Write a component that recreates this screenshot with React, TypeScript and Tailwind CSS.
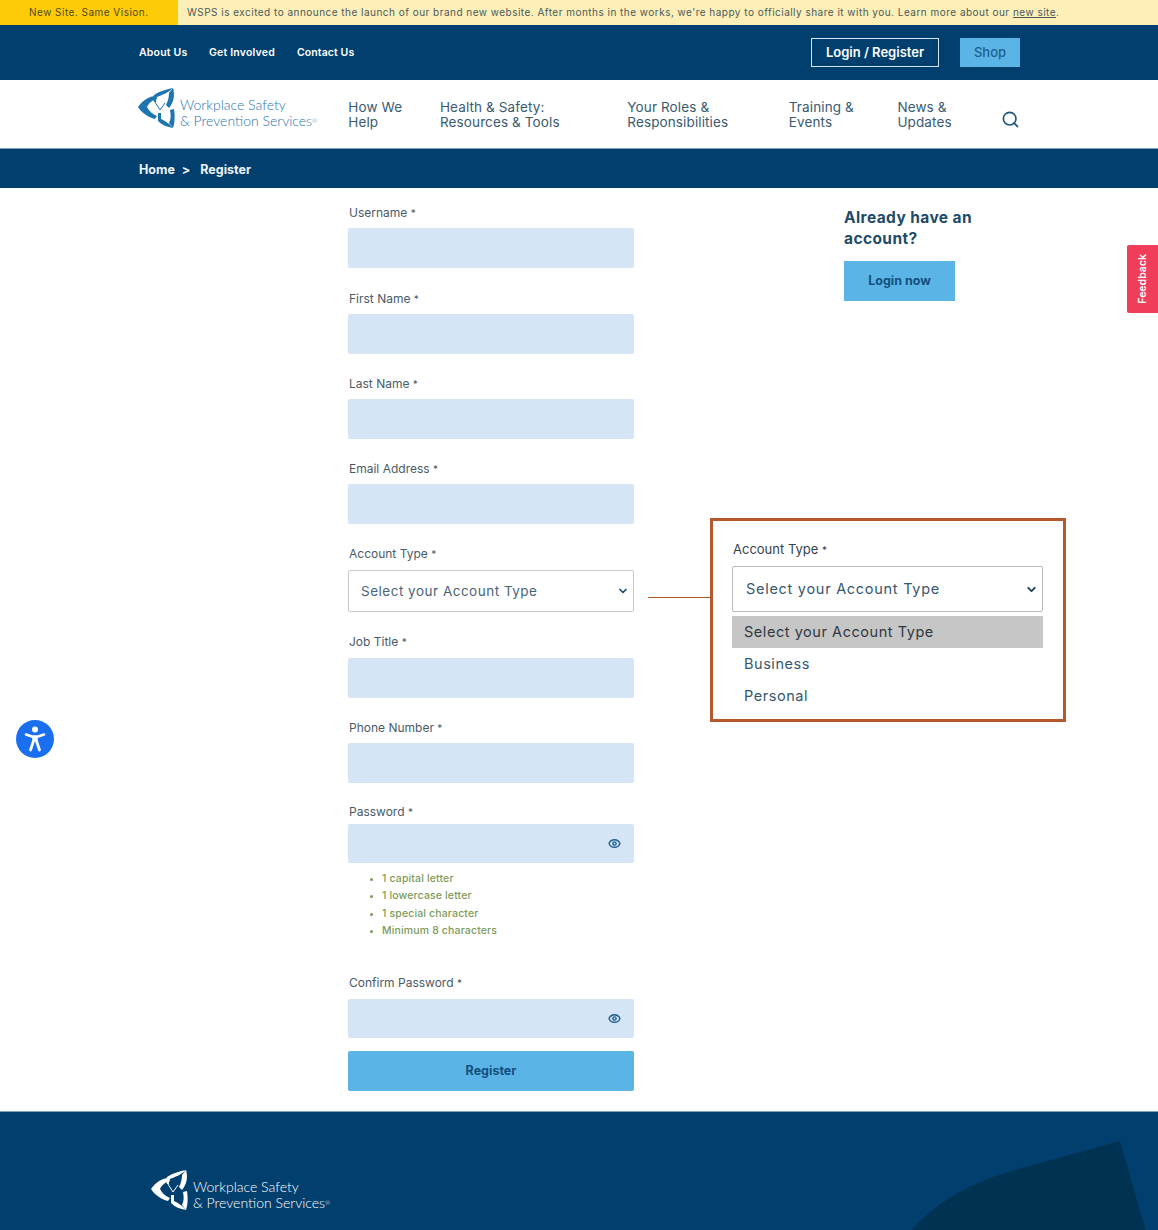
import { ChevronDown, Eye, Search } from "lucide-react";

const PASSWORD_RULES = [
  "1 capital letter",
  "1 lowercase letter",
  "1 special character",
  "Minimum 8 characters",
];

function Label({ text }: { text: string }) {
  return (
    <label className="block h-5 pl-px text-[12px] leading-5 text-[#4a5a66]">
      {text} <span className="text-[10px]">*</span>
    </label>
  );
}

function Field({ text, className, inputClass = "mt-[5px]" }: { text: string; className: string; inputClass?: string }) {
  return (
    <div className={className}>
      <Label text={text} />
      <input className={`${inputClass} block h-[40px] w-full rounded-[2px] bg-[#d5e5f6] outline-none`} />
    </div>
  );
}

function PasswordInput({ className }: { className: string }) {
  return (
    <div className={`${className} flex h-[39px] items-center justify-end rounded-[2px] bg-[#d5e5f6] pr-[13px]`}>
      <Eye size={13} strokeWidth={2.6} className="text-[#1d5f92]" />
    </div>
  );
}

function Logo({ className }: { className: string }) {
  return (
    <div className={`flex items-start tracking-normal ${className}`}>
      <svg width="38" height="40" viewBox="0 0 38 40" className="shrink-0 fill-current">
        <path d="M0 19 C5 12 11 8 18 8 L19 11 C14 12 11 15 9 19 Z" />
        <path d="M0 19 L9 19 C11 23 14 26 19 28 L17 31 C10 29 4 25 0 19 Z" />
        <path d="M35 0 C37 7 36 14 31 20 L28 17 C30 13 31 9 31 5 Z" />
        <path d="M35 0 C29 1 22 3 16 7 C15 10 15 12 16 14 L18 14 C18 12 18 11 19 9 C24 7 30 5 35 0 Z" />
        <path d="M35 40 C37 34 37 28 36 21 L32 22 C33 27 33 31 31 35 Z" />
        <path d="M35 40 C29 39 24 37 20 33 L20 25 L23 25 L23 31 C27 33 31 35 35 40 Z" />
        <path d="M17 14 L22 22 L27 15" fill="none" stroke="currentColor" strokeWidth="1" />
      </svg>
      <div className="mt-[9px] ml-[4px] whitespace-nowrap font-['Lato',sans-serif] text-[14px] leading-[16px] font-light">
        <div>Workplace Safety</div>
        <div>
          &amp; Prevention Services<span className="align-top text-[6px]">®</span>
        </div>
      </div>
    </div>
  );
}

export default function App() {
  return (
    <div className="relative h-[1230px] w-[1158px] overflow-hidden bg-white font-['Inter',sans-serif]">
      <div className="flex h-[25px] bg-[#fdefb7] text-[10px] leading-[25px] tracking-[0.48px]">
        <div className="w-[178px] bg-[#fdcb08] pl-[29px] text-[#4d4a20]">New Site. Same Vision.</div>
        <div className="pl-[9px] text-[#4a5a5c]">
          WSPS is excited to announce the launch of our brand new website. After months in the works, we're happy to officially share it with you. Learn more about our <span className="underline">new site</span>.
        </div>
      </div>

      <div className="h-[55px] bg-[#013f6f]">
        <div className="ml-[139px] flex h-full w-[881px] items-center text-white">
          <a className="w-[70px] text-[10.5px] font-semibold tracking-[0.2px]">About Us</a>
          <a className="w-[88px] text-[10.5px] font-semibold tracking-[0.2px]">Get Involved</a>
          <a className="text-[10.5px] font-semibold tracking-[0.1px]">Contact Us</a>
          <a className="ml-auto flex h-[29px] w-[128px] items-center justify-center border border-[#d5e5f6] text-[13px] font-semibold">
            Login / Register
          </a>
          <a className="ml-[21px] flex h-[29px] w-[60px] items-center justify-center bg-[#5ab4e5] text-[13px] font-medium text-[#1e5f8f]">
            Shop
          </a>
        </div>
      </div>

      <div className="h-[69px] border-b border-[#7fa3bf] bg-white">
        <div className="ml-[138px] flex h-full w-[882px] items-center text-[13.5px] leading-[15px] tracking-[0.12px] text-[#3a5a70]">
          <Logo className="mb-[12px] w-[211px] text-[#1f75b0]" />
          <a className="mt-[1px] w-[92px]">How We<br />Help</a>
          <a className="mt-[1px] w-[188px]">Health &amp; Safety:<br />Resources &amp; Tools</a>
          <a className="mt-[1px] w-[162px]">Your Roles &amp;<br />Responsibilities</a>
          <a className="mt-[1px] w-[109px]">Training &amp;<br />Events</a>
          <a className="mt-[1px] w-[104px]">News &amp;<br />Updates</a>
          <Search size={19} strokeWidth={2.1} className="mt-[11px] text-[#1d5578]" />
        </div>
      </div>

      <div className="h-[39px] bg-[#013f6f] pl-[139px] text-[12.5px] leading-[41px] font-bold text-[#eef4f8]">
        Home<span className="mx-[7px]">&gt;</span> Register
      </div>

      <main className="relative flex h-[923px] pl-[348px]">
        <form className="w-[286px] pt-[15px]">
          <Field text="Username" className="" />
          <Field text="First Name" className="mt-[21px]" />
          <Field text="Last Name" className="mt-[20px]" />
          <Field text="Email Address" className="mt-[20px]" />

          <div className="mt-[20px]">
            <Label text="Account Type" />
            <div className="mt-[6px] flex h-[42px] items-center justify-between rounded-[2px] border border-[#c5cbd0] pr-[4px] pl-[12px] text-[13.5px] tracking-[0.5px] text-[#4a6478]">
              Select your Account Type
              <ChevronDown size={12} strokeWidth={3.5} className="text-[#1d4f73]" />
            </div>
          </div>

          <Field text="Job Title" className="mt-[20px]" inputClass="mt-[6px]" />
          <Field text="Phone Number" className="mt-[20px]" />

          <div className="mt-[19px]">
            <Label text="Password" />
            <PasswordInput className="mt-[2px]" />
            <ul className="mt-[7px] pl-[34px] text-[10.5px] leading-[17.3px] font-medium tracking-[0.15px] text-[#7d9a58]">
              {PASSWORD_RULES.map((rule) => (
                <li key={rule} className="relative">
                  <span className="absolute top-[8px] left-[-12px] h-[3px] w-[3px] rounded-full bg-[#7d9a58]" />
                  {rule}
                </li>
              ))}
            </ul>
          </div>

          <div className="mt-[34px]">
            <Label text="Confirm Password" />
            <PasswordInput className="mt-[6px]" />
          </div>

          <button type="button" className="mt-[13px] block h-[40px] w-full rounded-[2px] bg-[#5ab4e5] pt-px text-[12.5px] font-bold text-[#14507d]">
            Register
          </button>
        </form>

        <aside className="ml-[210px] pt-[19px]">
          <h2 className="w-[150px] text-[15.5px] leading-[21px] font-bold tracking-[0.4px] text-[#1f4a68]">
            Already have an account?
          </h2>
          <a className="mt-[12px] flex h-[40px] w-[111px] items-center justify-center bg-[#5ab4e5] text-[12.5px] font-bold text-[#14507d]">
            Login now
          </a>
        </aside>

        <div className="absolute top-[409px] left-[648px] h-px w-[62px] bg-[#b5592a]" />

        <div className="absolute top-[330px] left-[710px] h-[204px] w-[356px] border-[3px] border-[#b5592a] bg-white pt-[18px] pl-[19px]">
          <div className="pl-px text-[13px] leading-[20px] text-[#35434d]">
            Account Type <span className="text-[10px]">*</span>
          </div>
          <div className="mt-[6px] flex h-[46px] w-[311px] items-center justify-between rounded-[2px] border border-[#b9b9b9] pr-[4px] pl-[13px] text-[14.5px] tracking-[0.72px] text-[#36566e]">
            Select your Account Type
            <ChevronDown size={13} strokeWidth={3.5} className="text-[#1d4059]" />
          </div>
          <ul className="mt-[4px] w-[311px] text-[14.5px] leading-[32px] tracking-[0.55px] text-[#36566e]">
            <li className="bg-[#c6c6c6] pl-[12px] text-[#30383e]">Select your Account Type</li>
            <li className="pl-[12px]">Business</li>
            <li className="pl-[12px]">Personal</li>
          </ul>
        </div>
      </main>

      <footer className="relative h-[119px] overflow-hidden border-t border-[#7fa3bf] bg-[#013f6f] pt-[58px] pl-[151px]">
        <Logo className="text-white" />
        <svg width="278" height="120" viewBox="0 0 278 120" className="absolute top-0 right-0 fill-[#003252]">
          <path d="M30 120 C60 85 100 68 135 58 L240 29 L266 120 Z" />
        </svg>
      </footer>

      <div className="absolute top-[245px] right-0 flex h-[68px] w-[31px] items-center justify-center rounded-l-[2px] bg-[#ef3d5a]">
        <span className="-rotate-90 text-[10.5px] font-semibold whitespace-nowrap text-white">Feedback</span>
      </div>

      <div className="absolute top-[720px] left-[16px] flex h-[38px] w-[38px] items-center justify-center rounded-full bg-[#1a6ff0]">
        <svg width="26" height="28" viewBox="0 0 26 28" fill="none" stroke="white" strokeLinecap="round" strokeLinejoin="round">
          <circle cx="13" cy="4.5" r="3" fill="white" stroke="none" />
          <path d="M4 9.5 L10 11.5 H16 L22 9.5" strokeWidth="2.6" />
          <path d="M13 11 V16" strokeWidth="5.5" strokeLinecap="butt" />
          <path d="M11.5 16 L8.5 25 M14.5 16 L17.5 25" strokeWidth="2.8" />
        </svg>
      </div>
    </div>
  );
}
